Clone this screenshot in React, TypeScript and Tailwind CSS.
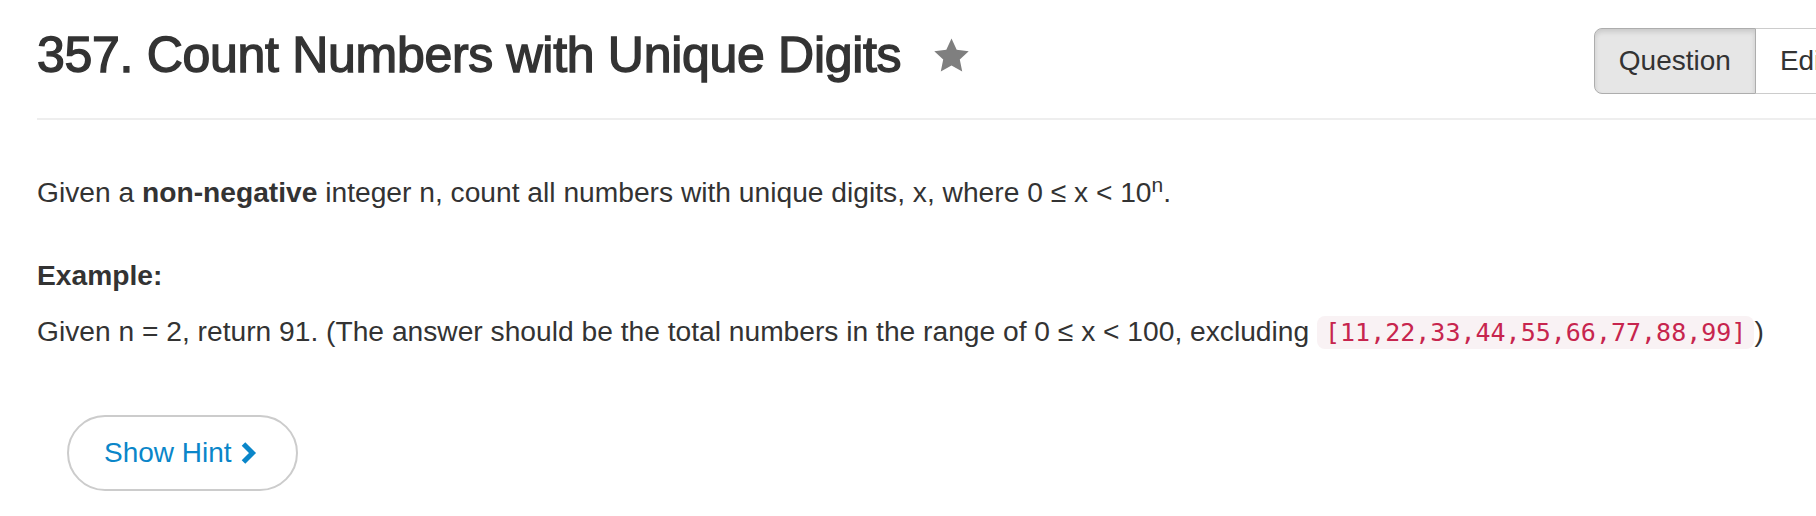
function StarIcon() {
    return (
        <svg viewBox="0 0 24 24" className="w-[39px] h-[39px]" aria-hidden>
            <path
                d="M12 1.6l3.2 6.9 7.4.9-5.5 5.1 1.5 7.4L12 18.2l-6.6 3.7 1.5-7.4-5.5-5.1 7.4-.9z"
                fill="#7f7f7f"
            />
        </svg>
    );
}

function ChevronIcon() {
    return (
        <svg viewBox="0 0 17 24" className="w-[17px] h-[24px]" aria-hidden>
            <polyline points="3.5,3 12.5,12 3.5,21" fill="none" stroke="currentColor" strokeWidth={5} strokeLinejoin="miter" />
        </svg>
    );
}

export default function App() {
    return (
        <div className="w-screen overflow-hidden bg-white text-[#333333] font-['Liberation_Sans',Arial,sans-serif]">
            <div className="w-[2015px] pl-[37px] pb-[27px]">
                {/* Header */}
                <div className="flex items-start justify-between pt-[26px]">
                    <div className="flex items-center gap-[31px] pt-[2px]">
                        <h3 className="text-[50px] leading-[55px] font-normal tracking-[-0.3px] [-webkit-text-stroke:1.4px_#333333]">
                            357. Count Numbers with Unique Digits
                        </h3>
                        <StarIcon />
                    </div>
                    <div className="flex mt-[2px] text-[28px] leading-[40px]">
                        <button className="px-[24px] py-[12px] bg-[#e6e6e6] border border-[#adadad] rounded-l-[8px] shadow-[inset_0_3px_5px_rgba(0,0,0,0.125)] text-[#333333]">
                            Question
                        </button>
                        <button className="px-[24px] py-[12px] bg-white border border-l-0 border-[#cccccc] rounded-r-[8px] text-[#333333]">
                            Editorial Solution
                        </button>
                    </div>
                </div>

                <hr className="mt-[24px] border-0 border-t-2 border-[#eeeeee]" />

                {/* Description */}
                <div className="text-[28.2px] leading-[40px] w-[1779px]">
                    <p className="mt-[52px]">
                        Given a <b>non-negative</b> integer n, count all numbers with unique digits, x, where 0 ≤ x &lt; 10
                        <sup className="text-[21px]">n</sup>.
                    </p>
                    <p className="mt-[43px] font-bold">Example:</p>
                    <p className="mt-[16px]">
                        Given n = 2, return 91. (The answer should be the total numbers in the range of 0 ≤ x &lt; 100, excluding{" "}
                        <code className="px-[8px] py-[2px] rounded-[8px] bg-[#f9f2f4] text-[#c7254e] text-[25px] font-['DejaVu_Sans_Mono',monospace]">
                            [11,22,33,44,55,66,77,88,99]
                        </code>
                        )
                    </p>
                </div>

                <div className="mt-[62px] pl-[30px]">
                    <button className="flex items-center gap-[8px] pl-[35px] pr-[39px] py-[16px] border-2 border-[#cccccc] rounded-full text-[28px] leading-[40px] text-[#0a86c9]">
                        <span>Show Hint</span>
                        <ChevronIcon />
                    </button>
                </div>
            </div>
        </div>
    );
}
